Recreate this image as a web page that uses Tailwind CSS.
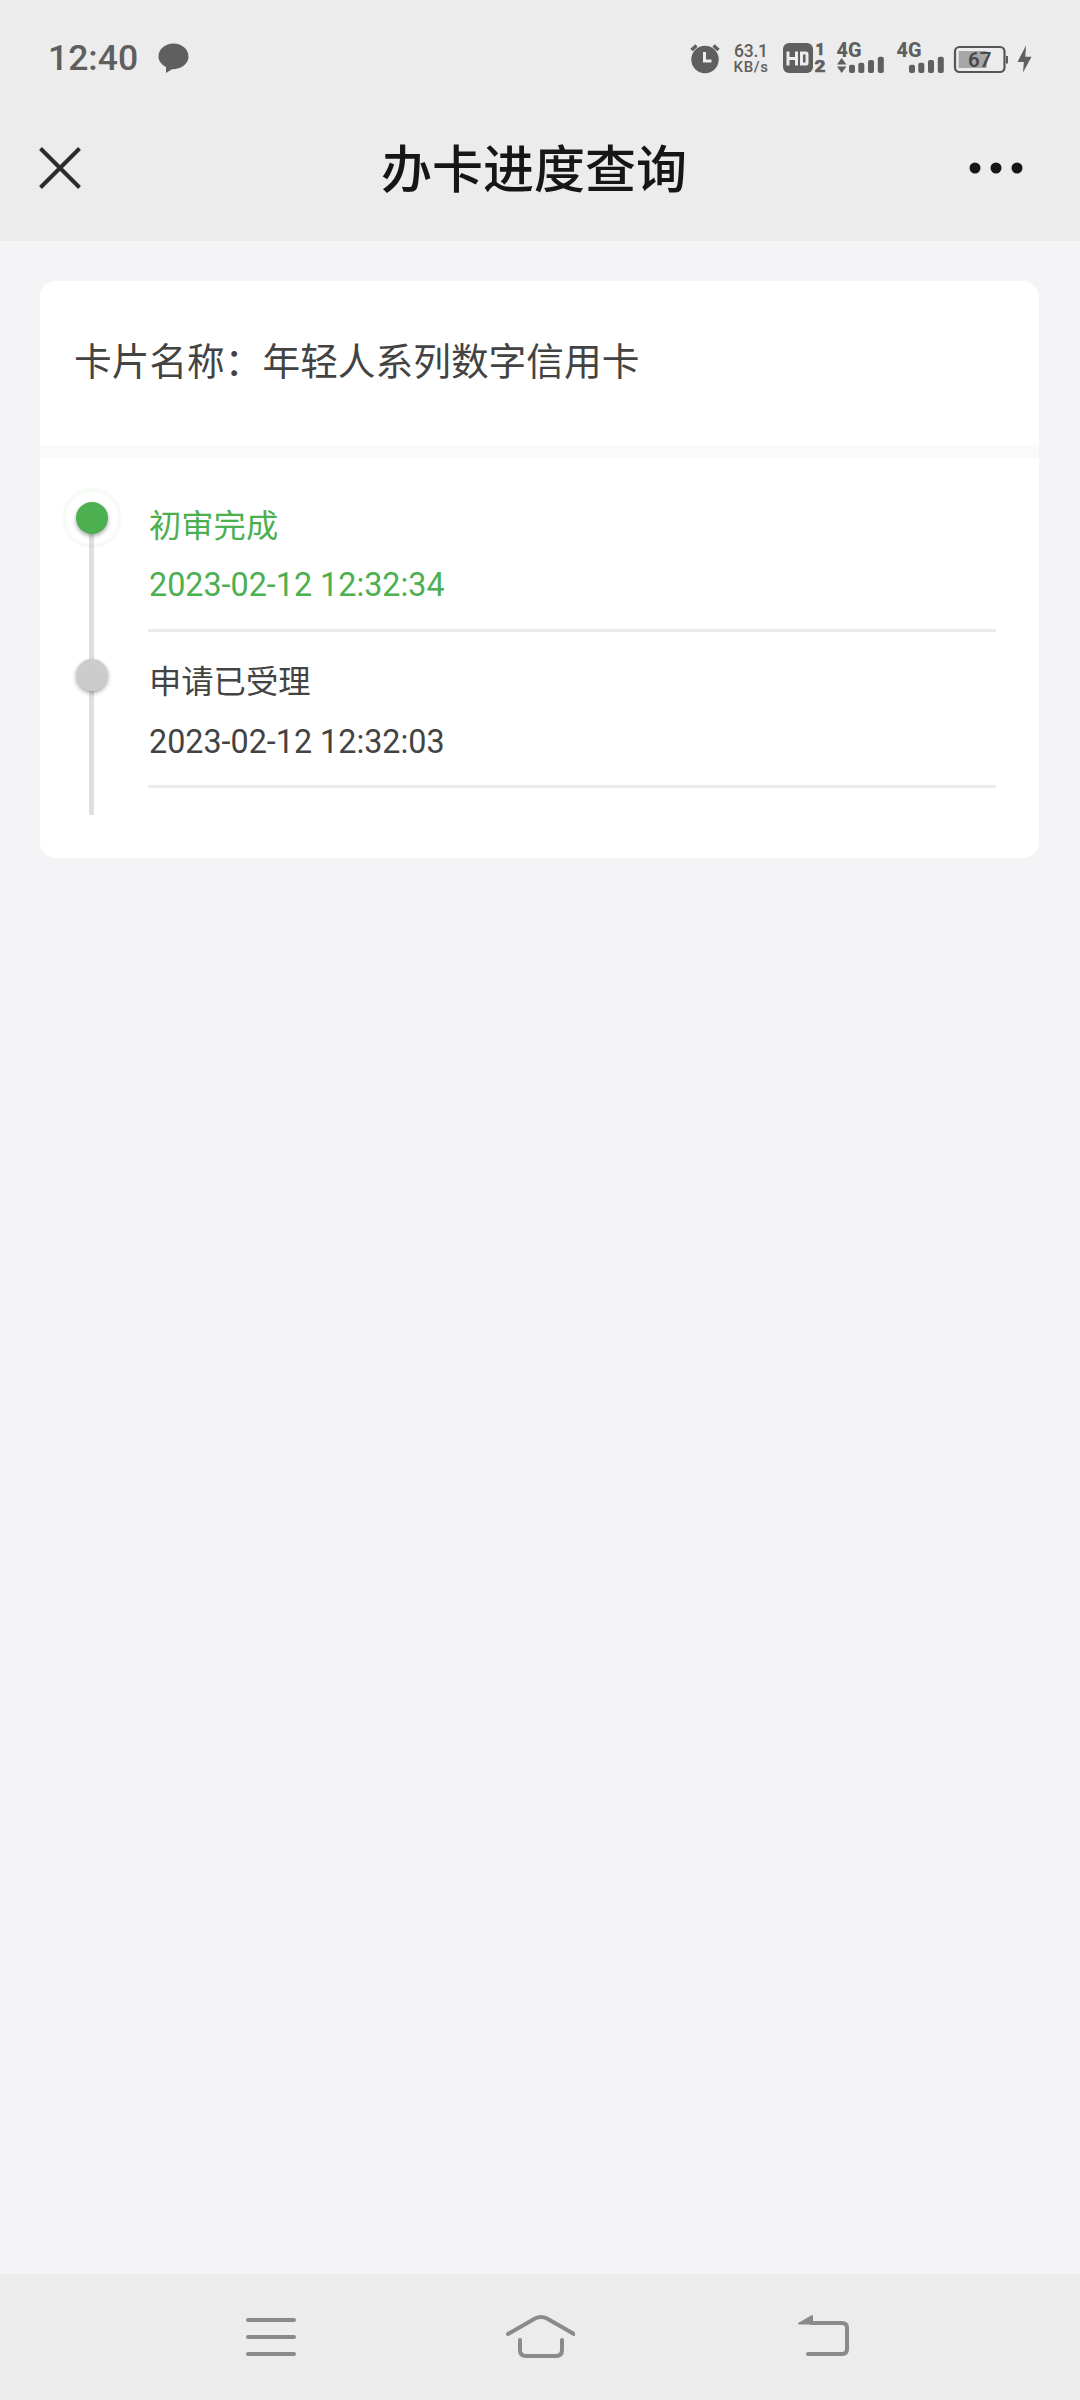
<!DOCTYPE html>
<html lang="zh-CN">
<head>
    <meta charset="UTF-8">
    <meta name="viewport" content="width=device-width, initial-scale=1.0">
    <title>办卡进度查询</title>
    <script src="https://cdn.jsdelivr.net/npm/@tailwindcss/browser@4"></script>
</head>
<body class="bg-[#f4f4f6] font-[Roboto,'Noto_Sans_CJK_SC',sans-serif] text-[#434343]">
    <div class="flex flex-col w-[1080px] h-[2400px]">
        <!-- Header -->
        <header class="h-[241px] shrink-0 bg-[#ececec]">
            <!-- Status bar -->
            <div class="flex items-center justify-between h-[116px] pl-12 text-[#5f5f5f]">
                <div class="flex items-center">
                    <span class="pt-px text-[35.500px] leading-none font-medium">12:40</span>
                    <svg class="ml-[19px] w-8 h-8" viewBox="0 0 32 32" fill="currentColor">
                        <path d="M16.500 1.500C8.300 1.500 1.500 7 1.500 14.500c0 4.500 3 8 7.500 10.400V31l6-3.700c8.800.2 16.500-5.200 16.500-12.800C31.500 7 24.700 1.500 16.500 1.500z"/>
                    </svg>
                </div>
                <svg class="w-[400px] h-[116px]" viewBox="680 0 400 116" fill="currentColor">
                    <!-- Alarm -->
                    <circle cx="705" cy="59.500" r="13.700"/>
                    <path d="M691.500 50l5-4.500M718.500 50l-5-4.500" stroke="currentColor" stroke-width="3.500"/>
                    <path d="M704.500 52v9h7" fill="none" stroke="#ececec" stroke-width="3"/>
                    <!-- Network speed -->
                    <text x="734" y="57" font-size="17.500" font-weight="500" textLength="34">63.1</text>
                    <text x="733.500" y="72.200" font-size="15" font-weight="500" textLength="34.500">KB/s</text>
                    <!-- HD -->
                    <rect x="783" y="43" width="30" height="30" rx="6"/>
                    <path d="M788 51.500v14M796.500 51.500v14M788 58.500h8.500M801.500 53v11h4.500q1 0 1-1v-9q0-1-1-1z" fill="none" stroke="#ececec" stroke-width="3"/>
                    <text x="815.500" y="54.500" font-size="16" font-weight="800" stroke="currentColor" stroke-width="0.600">1</text>
                    <text x="814.500" y="72.200" font-size="17" font-weight="800" stroke="currentColor" stroke-width="0.600" textLength="11" lengthAdjust="spacingAndGlyphs">2</text>
                    <!-- SIM 1 -->
                    <text x="836.500" y="57.300" font-size="19.500" font-weight="800" textLength="25" lengthAdjust="spacingAndGlyphs">4G</text>
                    <path d="M837 64.500l4.700-6.500 4.700 6.500zM837 66.500l4.700 6.500 4.700-6.500z"/>
                    <rect x="849" y="64.700" width="6" height="8.300" rx="2"/>
                    <rect x="858.300" y="62.700" width="6" height="10.300" rx="2"/>
                    <rect x="868" y="60" width="6" height="13" rx="2"/>
                    <rect x="877.800" y="56.700" width="6" height="16.300" rx="2"/>
                    <!-- SIM 2 -->
                    <text x="896.500" y="57.300" font-size="19.500" font-weight="800" textLength="25" lengthAdjust="spacingAndGlyphs">4G</text>
                    <rect x="909" y="64.700" width="6" height="8.300" rx="2"/>
                    <rect x="918.300" y="62.700" width="6" height="10.300" rx="2"/>
                    <rect x="928" y="60" width="6" height="13" rx="2"/>
                    <rect x="937.800" y="56.700" width="6" height="16.300" rx="2"/>
                    <!-- Battery -->
                    <rect x="955" y="47" width="49.500" height="25" rx="4.500" fill="none" stroke="#555" stroke-width="2.200"/>
                    <rect x="958.700" y="51" width="28" height="17" fill="#a6a6a6"/>
                    <rect x="1006" y="56" width="2" height="7.500"/>
                    <text x="968" y="67" font-size="20.500" font-weight="600" fill="#484848" textLength="23.500">67</text>
                    <path d="M1026 45.500l-8.500 16.500h6.300l-.8 10.500 8.500-15.700h-6.200z"/>
                </svg>
            </div>
            <!-- Title bar -->
            <div class="flex items-center justify-between h-[104px] pl-9 pr-[57px]">
                <svg class="w-12 h-12 text-[#2b2b2b]" viewBox="0 0 48 48" fill="none" stroke="currentColor" stroke-width="4">
                    <path d="M4.500 4.500l39 39M43.500 4.500l-39 39"/>
                </svg>
                <h1 class="ml-[15px] pt-1 text-[51px] leading-none font-medium text-[#161616]">办卡进度查询</h1>
                <svg class="w-[54px] h-3" viewBox="0 0 54 12" fill="#161616">
                    <circle cx="6" cy="6" r="5.500"/>
                    <circle cx="27" cy="6" r="5.500"/>
                    <circle cx="48" cy="6" r="5.500"/>
                </svg>
            </div>
        </header>

        <main class="flex-1 px-10 pt-10">
            <div class="w-[999px] h-[577px] bg-white rounded-2xl">
                <div class="flex items-center h-[164px] pl-[34px]">
                    <p class="text-[37.700px] leading-none">卡片名称：年轻人系列数字信用卡</p>
                </div>
                <div class="h-[13px] bg-[#fafafa]"></div>

                <!-- Progress timeline -->
                <ul class="relative pt-[43px] pl-[108px] pr-[43px] text-[32.300px] leading-none">
                    <li class="absolute left-[49px] top-[60px] w-[5px] h-[297px] bg-[#dfdfdf]"></li>
                    <li class="relative h-[131px] border-b-3 border-[#ebebeb] text-[#4caf50]">
                        <span class="absolute -left-[72px] top-[1px] size-8 rounded-full bg-[#4caf50] shadow-[0_2px_4px_rgba(0,0,0,0.35)]"></span>
                        <span class="absolute -left-[86px] -top-[13px] size-[60px] rounded-full border-4 border-[#4caf50]/5"></span>
                        <p class="pt-[9px] pl-px">初审完成</p>
                        <p class="pt-[27px] pl-px">2023-02-12 12:32:34</p>
                    </li>
                    <li class="relative h-[131px] mt-[25px] border-b-3 border-[#ebebeb]">
                        <span class="absolute -left-[72px] top-[2px] size-8 rounded-full bg-[#cccccc] shadow-[0_2px_4px_rgba(0,0,0,0.35)]"></span>
                        <p class="pt-[9px] pl-px">申请已受理</p>
                        <p class="pt-[28px] pl-px">2023-02-12 12:32:03</p>
                    </li>
                </ul>
            </div>
        </main>

        <!-- Bottom navigation -->
        <nav class="flex items-center justify-between h-[126px] shrink-0 px-[236px] bg-[#ececec] text-[#8a8a8a]">
            <svg class="w-[70px] h-[70px]" viewBox="236 2302 70 70" fill="none" stroke="currentColor" stroke-width="4" stroke-linecap="round">
                <path d="M248 2320h46M248 2337h46M248 2354h46"/>
            </svg>
            <svg class="w-[70px] h-[70px]" viewBox="505 2302 70 70" fill="none" stroke="currentColor" stroke-width="4" stroke-linecap="round">
                <path d="M508 2334l27-15.500q6-3 12 0l27 15.500M520 2340v10q0 6 6 6h30q6 0 6-6v-10"/>
            </svg>
            <svg class="w-[70px] h-[70px] overflow-visible" viewBox="774 2302 70 70" fill="none" stroke="currentColor" stroke-width="4" stroke-linecap="round" stroke-linejoin="round">
                <path d="M811 2323h31q5 0 5 5v21q0 5-5 5h-34"/>
                <path d="M799 2323.500l13-7.500v7.500z" fill="currentColor" stroke-width="2"/>
            </svg>
        </nav>
    </div>
</body>
</html>
